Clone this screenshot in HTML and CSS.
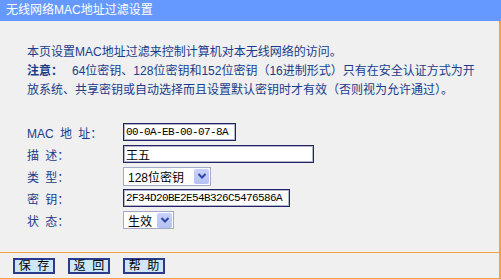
FILE: index.html
```html
<!DOCTYPE html>
<html lang="zh-CN">
  <head>
    <meta charset="UTF-8" />
    <title>无线网络MAC地址过滤设置</title>
    <link rel="stylesheet" href="styles.css">
  </head>
  <body>
    <div class="title">无线网络MAC地址过滤设置</div>
    <div class="panel">
      <div class="intro">
        本页设置MAC地址过滤来控制计算机对本无线网络的访问。<br />
        <b class="note">注意：</b>64位密钥、128位密钥和152位密钥（16进制形式）只有在安全认证方式为开<br />
        放系统、共享密钥或自动选择而且设置默认密钥时才有效（否则视为允许通过）。
      </div>

      <div class="form">
        <div class="row">
          <label>MAC 地 址：</label>
          <input class="text mono mac" type="text" value="00-0A-EB-00-07-8A" />
        </div>
        <div class="row">
          <label>描 述：</label>
          <input class="text desc" type="text" value="王五" />
        </div>
        <div class="row">
          <label>类 型：</label>
          <div class="select type">
            <span class="value">128位密钥</span>
            <span class="arrow">
              <svg width="14" height="14" viewBox="0 0 14 14"><path d="M3.5 5 L7 8.5 L10.5 5" fill="none" stroke="#2f45a8" stroke-width="2" /></svg>
            </span>
          </div>
        </div>
        <div class="row">
          <label>密 钥：</label>
          <input class="text mono key" type="text" value="2F34D20BE2E54B326C5476586A" />
        </div>
        <div class="row">
          <label>状 态：</label>
          <div class="select state">
            <span class="value">生效</span>
            <span class="arrow">
              <svg width="14" height="14" viewBox="0 0 14 14"><path d="M3.5 5 L7 8.5 L10.5 5" fill="none" stroke="#2f45a8" stroke-width="2" /></svg>
            </span>
          </div>
        </div>
      </div>

      <div class="actions">
        <button class="btn">保 存</button>
        <button class="btn">返 回</button>
        <button class="btn">帮 助</button>
      </div>
    </div>
  </body>
</html>
```

FILE: styles.css
```css
body {
  margin: 0;
  background-color: #f0f0f0;
  font: 12px "Liberation Sans", "Noto Sans CJK SC", sans-serif;
  overflow: hidden;
}

.title {
  height: 21px;
  line-height: 21px;
  padding-left: 6px;
  background-color: #6699ff;
  color: #fff;
}

.panel {
  display: flex;
  flex-direction: column;
  height: 258px;
  border-right: 2px solid #f5a042;
}

.intro {
  padding: 22px 0 0 27px;
  line-height: 19px;
  color: #1a3c8c;
  white-space: nowrap;
}

.note {
  margin-right: 9px;
}

.form {
  margin-top: 21px;
  padding-left: 27px;
}

.row {
  display: flex;
  align-items: center;
  height: 22px;
}

.row label {
  width: 96px;
  color: #1a3c8c;
  word-spacing: 3px;
}

.text {
  box-sizing: border-box;
  height: 18px;
  margin: 0;
  padding: 0 2px;
  border: 1px solid #23236a;
  box-shadow: inset 0 0 0 1px #b4b4cc;
  background-color: #fff;
  color: #000;
  font: 12px "Liberation Sans", "Noto Sans CJK SC", sans-serif;
  outline: none;
}

.mono {
  font: 11px "Liberation Mono", monospace;
  letter-spacing: -0.6px;
}

.mac {
  width: 113px;
}

.desc {
  width: 191px;
}

.key {
  width: 167px;
}

.select {
  box-sizing: border-box;
  display: flex;
  align-items: center;
  justify-content: space-between;
  height: 19px;
  padding: 0 1px 0 4px;
  border: 1px solid #a3aac6;
  background-color: #fff;
  color: #000;
}

.select.type {
  width: 88px;
}

.select.state {
  width: 51px;
  height: 18px;
}

.arrow {
  display: flex;
  align-items: center;
  justify-content: center;
  width: 15px;
  height: 15px;
  border-radius: 2px;
  background: linear-gradient(#c9d2fb, #b6c1f4);
}

.actions {
  box-sizing: border-box;
  display: flex;
  align-items: center;
  gap: 13px;
  height: 27px;
  margin-top: auto;
  padding-left: 13px;
  border-top: 1px solid #f5a042;
  border-bottom: 1px solid #f5a042;
}

.btn {
  box-sizing: border-box;
  width: 42px;
  height: 16px;
  padding: 0;
  border: 2px solid #2b3a8a;
  background-color: #cde6f8;
  color: #000;
  font: 12px "Liberation Sans", "Noto Sans CJK SC", sans-serif;
  line-height: 12px;
  word-spacing: 3px;
}
```
